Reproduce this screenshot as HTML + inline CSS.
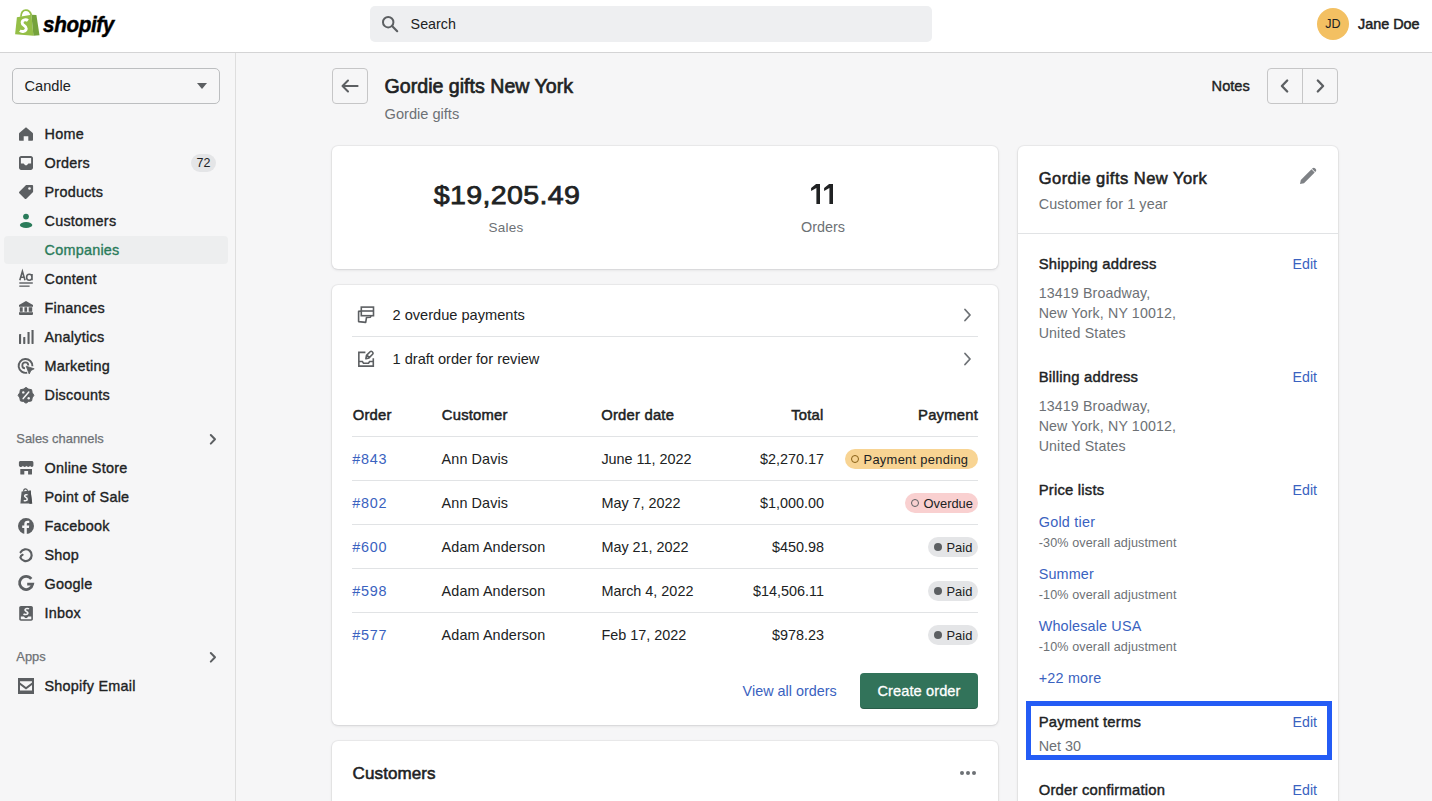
<!DOCTYPE html>
<html><head><meta charset="utf-8">
<style>
*{box-sizing:border-box;margin:0;padding:0}
html,body{width:1432px;height:801px;overflow:hidden;background:#f6f6f7;font-family:"Liberation Sans",sans-serif;color:#202223}
.abs{position:absolute}
#top{position:absolute;left:0;top:0;width:1432px;height:53px;background:#fff;border-bottom:1px solid #d4d4d5}
#side{position:absolute;left:0;top:53px;width:236px;height:748px;background:#f6f6f7;border-right:1px solid #dedede}
.t{position:absolute;white-space:nowrap}
.card{position:absolute;background:#fff;border-radius:6px;box-shadow:0 0 0 1px rgba(63,63,68,0.05),0 1px 3px 0 rgba(63,63,68,0.15)}
.div{position:absolute;height:1px;background:#e1e3e5}
</style></head><body>
<div id="top"></div>
<svg class="abs" style="left:0;top:0" width="45" height="45" viewBox="0 0 45 45">
    <path d="M20.9 16.8 C21.1 12.6 23.2 10.1 25.9 10.1 C28.6 10.1 30.5 12.2 31.3 15" fill="none" stroke="#95bf47" stroke-width="1.8"/>
    <path d="M23.6 15.8 C24 13.4 24.9 12.2 26.2 12.2" fill="none" stroke="#fff" stroke-width="0.6"/>
    <path d="M16.9 17.2 L31.4 14.7 L33.4 35.7 L15.1 34.3 Z" fill="#95bf47"/>
    <path d="M31.4 14.7 L36.4 15.1 L39.5 35.3 L33.4 35.7 Z" fill="#75a23c"/>
    <path d="M27.9 20.6 C26.6 19.5 22.3 19.2 22.1 22.6 C21.9 25.6 26.6 25.4 26.3 28.7 C26 31.7 21.8 32.1 19.9 30.7" fill="none" stroke="#fff" stroke-width="2.9"/>
  </svg>
<div class="t" style="left:43px;top:13.4px;font-size:24px;line-height:1;font-weight:bold;font-style:italic;letter-spacing:-0.4px;color:#000;-webkit-text-stroke:0.5px #000;transform:scale(0.86,0.93);transform-origin:0 0">shopify</div>
<div class="abs" style="left:370px;top:6px;width:562px;height:36px;background:#eeeff1;border-radius:5px"></div>
<svg class="abs" style="left:381px;top:15px" width="18" height="18" viewBox="0 0 20 20"><circle cx="8" cy="8" r="5.8" fill="none" stroke="#5c5f62" stroke-width="2.2"/><path d="M12.3 12.3 L18 18" stroke="#5c5f62" stroke-width="2.4" stroke-linecap="round"/></svg>
<div class="t" style="top:14.35px;font-size:14.3px;line-height:20px;color:#202223;left:410.6px;">Search</div>
<div class="abs" style="left:1317px;top:8px;width:32px;height:32px;border-radius:50%;background:#f3c062"></div>
<div class="t" style="top:14.47px;font-size:12.5px;line-height:20px;color:#202223;left:1033px;width:600px;text-align:center;">JD</div>
<div class="t" style="top:14.01px;font-size:14.4px;line-height:20px;color:#202223;-webkit-text-stroke:0.5px #202223;left:1358px;">Jane Doe</div>
<div id="side"></div>
<div class="abs" style="left:12px;top:68px;width:208px;height:36px;border:1px solid #bcbec0;border-radius:5px"></div>
<div class="t" style="top:75.94px;font-size:14.6px;line-height:20px;color:#202223;left:24.5px;">Candle</div>
<svg class="abs" style="left:197px;top:83px" width="10" height="6" viewBox="0 0 10 6"><path d="M0 0 H10 L5 6 Z" fill="#5c5f62"/></svg>
<div class="abs" style="left:4px;top:236px;width:224px;height:28px;border-radius:4px;background:#edeeef"></div>
<div class="t" style="top:124.01px;font-size:14.4px;line-height:20px;color:#202223;letter-spacing:0.25px;-webkit-text-stroke:0.35px #202223;left:44.5px;">Home</div>
<div class="t" style="top:153.01px;font-size:14.4px;line-height:20px;color:#202223;letter-spacing:0.25px;-webkit-text-stroke:0.35px #202223;left:44.5px;">Orders</div>
<div class="t" style="top:182.01px;font-size:14.4px;line-height:20px;color:#202223;letter-spacing:0.25px;-webkit-text-stroke:0.35px #202223;left:44.5px;">Products</div>
<div class="t" style="top:211.01px;font-size:14.4px;line-height:20px;color:#202223;letter-spacing:0.25px;-webkit-text-stroke:0.35px #202223;left:44.5px;">Customers</div>
<div class="t" style="top:240.01px;font-size:14.4px;line-height:20px;color:#2a7b5a;letter-spacing:0.25px;-webkit-text-stroke:0.35px #2a7b5a;left:44.5px;">Companies</div>
<div class="t" style="top:269.01px;font-size:14.4px;line-height:20px;color:#202223;letter-spacing:0.25px;-webkit-text-stroke:0.35px #202223;left:44.5px;">Content</div>
<div class="t" style="top:298.01px;font-size:14.4px;line-height:20px;color:#202223;letter-spacing:0.25px;-webkit-text-stroke:0.35px #202223;left:44.5px;">Finances</div>
<div class="t" style="top:327.01px;font-size:14.4px;line-height:20px;color:#202223;letter-spacing:0.25px;-webkit-text-stroke:0.35px #202223;left:44.5px;">Analytics</div>
<div class="t" style="top:356.01px;font-size:14.4px;line-height:20px;color:#202223;letter-spacing:0.25px;-webkit-text-stroke:0.35px #202223;left:44.5px;">Marketing</div>
<div class="t" style="top:385.01px;font-size:14.4px;line-height:20px;color:#202223;letter-spacing:0.25px;-webkit-text-stroke:0.35px #202223;left:44.5px;">Discounts</div>
<div class="t" style="top:458.01px;font-size:14.4px;line-height:20px;color:#202223;letter-spacing:0.25px;-webkit-text-stroke:0.35px #202223;left:44.5px;">Online Store</div>
<div class="t" style="top:487.01px;font-size:14.4px;line-height:20px;color:#202223;letter-spacing:0.25px;-webkit-text-stroke:0.35px #202223;left:44.5px;">Point of Sale</div>
<div class="t" style="top:516.01px;font-size:14.4px;line-height:20px;color:#202223;letter-spacing:0.25px;-webkit-text-stroke:0.35px #202223;left:44.5px;">Facebook</div>
<div class="t" style="top:545.01px;font-size:14.4px;line-height:20px;color:#202223;letter-spacing:0.25px;-webkit-text-stroke:0.35px #202223;left:44.5px;">Shop</div>
<div class="t" style="top:574.01px;font-size:14.4px;line-height:20px;color:#202223;letter-spacing:0.25px;-webkit-text-stroke:0.35px #202223;left:44.5px;">Google</div>
<div class="t" style="top:603.01px;font-size:14.4px;line-height:20px;color:#202223;letter-spacing:0.25px;-webkit-text-stroke:0.35px #202223;left:44.5px;">Inbox</div>
<div class="t" style="top:676.01px;font-size:14.4px;line-height:20px;color:#202223;letter-spacing:0.25px;-webkit-text-stroke:0.35px #202223;left:44.5px;">Shopify Email</div>
<svg class="abs" style="left:0;top:0;overflow:visible" width="236" height="801" viewBox="0 0 236 801"><path d="M26 127.2 L32.5 132.7 C32.8 133 33 133.4 33 133.8 V139.8 C33 140.4 32.6 140.8 32 140.8 H28.3 V136.3 H23.7 V140.8 H20 C19.4 140.8 19 140.4 19 139.8 V133.8 C19 133.4 19.2 133 19.5 132.7 Z" fill="#5c5f62" /><path d="M21.2 156 H30.8 C32 156 33 157 33 158.2 V167.8 C33 169 32 170 30.8 170 H21.2 C20 170 19 169 19 167.8 V158.2 C19 157 20 156 21.2 156 Z M20.9 157.9 V163.6 H23.6 L25.2 165.2 H26.8 L28.4 163.6 H31.1 V157.9 Z" fill="#5c5f62" fill-rule="evenodd"/><path d="M26.6 184.9 H32 C32.6 184.9 33.1 185.4 33.1 186 V191.4 C33.1 191.7 33 192 32.8 192.2 L26.3 198.7 C25.9 199.1 25.2 199.1 24.8 198.7 L19.3 193.2 C18.9 192.8 18.9 192.1 19.3 191.7 L25.8 185.2 C26 185 26.3 184.9 26.6 184.9 Z" fill="#5c5f62" /><circle cx="29.5" cy="188.5" r="1.3" fill="#f6f6f7"/><circle cx="26" cy="216.6" r="2.9" fill="#2a7b5a"/><ellipse cx="26.1" cy="225" rx="6.2" ry="3" fill="#2a7b5a"/><path d="M19.8 280.3 L22.4 271.3 L25 280.3 M20.7 277.2 H24.1" fill="none" stroke="#5c5f62" stroke-width="1.6"/><path d="M32 274 V280.3 M32 277.2 C32 275.3 31 274.2 29.3 274.2 C27.6 274.2 26.6 275.4 26.6 277.2 C26.6 279 27.6 280.2 29.3 280.2 C31 280.2 32 279.1 32 277.2" fill="none" stroke="#5c5f62" stroke-width="1.6"/><rect x="19.3" y="282.3" width="13.5" height="1.4" fill="#5c5f62"/><rect x="19.3" y="285.5" width="10.3" height="1.3" fill="#5c5f62"/><path d="M26 301 L33 305 V306.7 H19 V305 Z M19.8 307.2 H22.7 V311.8 H19.8 Z M24.4 307.2 H27.1 V311.8 H24.4 Z M28.7 307.2 H32.2 V311.8 H28.7 Z M19 312.2 H33 V314 C33 314.5 32.6 314.9 32.1 314.9 H19.9 C19.4 314.9 19 314.5 19 314 Z" fill="#5c5f62" /><rect x="19" y="334" width="2.1" height="10" rx="0.4" fill="#5c5f62"/><rect x="23.2" y="337" width="2.1" height="7" rx="0.4" fill="#5c5f62"/><rect x="27.5" y="332" width="2.1" height="12" rx="0.4" fill="#5c5f62"/><rect x="31.5" y="330" width="2.1" height="14" rx="0.4" fill="#5c5f62"/><path d="M27.2 372.6 A6.9 6.9 0 1 1 32.4 366.2" fill="none" stroke="#5c5f62" stroke-width="1.9"/><path d="M25 368.4 A3 3 0 1 1 28.3 365.4" fill="none" stroke="#5c5f62" stroke-width="1.8"/><path d="M26.2 366.2 L34.2 368.8 L31 370.4 L29.2 374 Z" fill="#5c5f62" stroke="#5c5f62" stroke-width="0.8" stroke-linejoin="round"/><path d="M26.00 387.40 L28.56 389.11 L31.59 389.71 L32.19 392.74 L33.90 395.30 L32.19 397.86 L31.59 400.89 L28.56 401.49 L26.00 403.20 L23.44 401.49 L20.41 400.89 L19.81 397.86 L18.10 395.30 L19.81 392.74 L20.41 389.71 L23.44 389.11 Z" fill="#5c5f62" stroke="#5c5f62" stroke-width="1" stroke-linejoin="round"/><path d="M23.2 398.6 L28.8 392" stroke="#f6f6f7" stroke-width="1.5" stroke-linecap="round"/><circle cx="23.3" cy="392.4" r="1.2" fill="#f6f6f7"/><circle cx="28.7" cy="398.3" r="1.2" fill="#f6f6f7"/><path d="M20.5 461 H31.8 C32.7 461 33.4 461.7 33.4 462.6 V465.3 C33.4 466.3 32.7 467 31.8 467 C31 467 30.4 466.5 30.1 465.8 C29.8 466.5 29.1 467 28.3 467 C27.5 467 26.8 466.5 26.5 465.8 C26.2 466.5 25.5 467 24.7 467 C23.9 467 23.2 466.5 22.9 465.8 C22.6 466.5 21.9 467 21.1 467 C19.8 467 18.9 466.2 18.9 465.2 V462.6 C18.9 461.7 19.6 461 20.5 461 Z" fill="#5c5f62" /><path d="M20.3 469.1 H32 V474 C32 474.3 31.7 474.6 31.4 474.6 H28.1 V470.9 H24.3 V474.6 H20.9 C20.6 474.6 20.3 474.3 20.3 474 Z" fill="#5c5f62" /><path d="M21.6 491.6 L30.6 490.6 L32.2 503.6 L20.4 503.6 Z" fill="#5c5f62" /><path d="M29.5 490.8 L30.6 490.6 L32.2 503.6 L29.5 504.1 Z" fill="#4a4d50" /><path d="M23.6 491.6 C23.6 489.8 24.6 488.9 25.6 488.9 C26.6 488.9 27.4 489.8 27.6 491.2" fill="none" stroke="#5c5f62" stroke-width="1.1"/><path d="M27.6 495 C26.9 494.5 24.6 494.5 24.6 496 C24.6 497.5 27.2 497.4 27.2 499.2 C27.2 500.8 25 501 23.8 500.3" fill="none" stroke="#f6f6f7" stroke-width="1.5"/><circle cx="26" cy="526.1" r="8" fill="#5c5f62"/><path d="M26.8 534.2 V528 H28.9 L29.2 525.6 H26.8 V524.2 C26.8 523.5 27 523 28 523 H29.3 V520.8 C29.1 520.8 28.3 520.7 27.4 520.7 C25.6 520.7 24.3 521.8 24.3 523.9 V525.6 H22.2 V528 H24.3 V534.2 Z" fill="#f6f6f7" /><path transform="translate(0 1.4)" d="M20.6 550.9 A5.9 5.9 0 1 1 20.4 556.2 Q20.6 554.4 22.6 553.4" fill="none" stroke="#5c5f62" stroke-width="2.2" stroke-linecap="round" stroke-linejoin="round"/><path d="M31.3 578.8 A6.6 6.6 0 1 0 32.6 584.2 H27.2" fill="none" stroke="#5c5f62" stroke-width="2.8"/><path d="M20.9 605.9 H31.2 C32.1 605.9 32.9 606.7 32.9 607.6 V619.1 C32.9 620 32.1 620.8 31.2 620.8 H20.9 C20 620.8 19.2 620 19.2 619.1 V607.6 C19.2 606.7 20 605.9 20.9 605.9 Z M20.8 616.6 V619.2 H31.3 V616.6 H28.3 L26.9 617.9 H25.2 L23.8 616.6 Z" fill="#5c5f62" fill-rule="evenodd"/><path d="M29 608.9 C28.2 608.3 25.2 608.1 25 609.9 C24.8 611.6 28.2 611.4 27.9 613.2 C27.6 614.9 24.6 614.8 23.5 614" fill="none" stroke="#f6f6f7" stroke-width="1.6"/><path d="M18 678 H34 V694 H18 Z M20 681.2 V682.6 L26 687.1 L32 682.6 V681.2 Z M20 684.9 V690.6 H32 V684.9 L26 689.4 Z" fill="#5c5f62" fill-rule="evenodd"/><path d="M210.8 435 L215 439.3 L210.8 443.6" fill="none" stroke="#5c5f62" stroke-width="2" stroke-linecap="round" stroke-linejoin="round"/><path d="M210.8 653 L215 657.3 L210.8 661.6" fill="none" stroke="#5c5f62" stroke-width="2" stroke-linecap="round" stroke-linejoin="round"/></svg>
<div class="abs" style="left:191px;top:154px;width:25px;height:18px;border-radius:9px;background:#e4e5e7"></div>
<div class="t" style="top:152.67px;font-size:12.5px;line-height:20px;color:#202223;left:-96.5px;width:600px;text-align:center;">72</div>
<div class="t" style="top:428.53px;font-size:12.9px;line-height:20px;color:#6d7175;-webkit-text-stroke:0.25px #6d7175;left:16.3px;">Sales channels</div>
<div class="t" style="top:646.53px;font-size:12.9px;line-height:20px;color:#6d7175;-webkit-text-stroke:0.25px #6d7175;left:16.3px;">Apps</div>
<div class="abs" style="left:332px;top:68px;width:36px;height:36px;border:1px solid #c6c6c7;border-radius:4px"></div>
<svg class="abs" style="left:340px;top:78px" width="20" height="16" viewBox="0 0 20 16"><path d="M8 2.5 L2.5 8 L8 13.5 M2.5 8 H17.6" fill="none" stroke="#5c5f62" stroke-width="2" stroke-linecap="round" stroke-linejoin="round"/></svg>
<div class="t" style="top:75.91px;font-size:19.6px;line-height:20px;color:#202223;-webkit-text-stroke:0.65px #202223;left:384.6px;">Gordie gifts New York</div>
<div class="t" style="top:103.84px;font-size:14.6px;line-height:20px;color:#6d7175;left:384.6px;">Gordie gifts</div>
<div class="t" style="top:75.84px;font-size:14.6px;line-height:20px;color:#202223;-webkit-text-stroke:0.4px #202223;left:1211.6px;">Notes</div>
<div class="abs" style="left:1267px;top:68px;width:71px;height:36px;border:1px solid #c6c6c7;border-radius:4px"></div>
<div class="abs" style="left:1302px;top:68px;width:1px;height:36px;background:#c6c6c7"></div>
<svg class="abs" style="left:1278px;top:78px" width="14" height="16" viewBox="0 0 14 16"><path d="M9.2 2.5 L3.9 8 L9.2 13.5" fill="none" stroke="#5c5f62" stroke-width="2.3" stroke-linecap="round" stroke-linejoin="round"/></svg>
<svg class="abs" style="left:1314px;top:78px" width="14" height="16" viewBox="0 0 14 16"><path d="M3.8 2.5 L9.1 8 L3.8 13.5" fill="none" stroke="#5c5f62" stroke-width="2.3" stroke-linecap="round" stroke-linejoin="round"/></svg>
<div class="card" style="left:332px;top:146px;width:666px;height:123px"></div>
<div class="t" style="top:184.89px;font-size:26px;line-height:20px;color:#202223;letter-spacing:0.3px;-webkit-text-stroke:0.75px #202223;left:206.60000000000002px;width:600px;text-align:center;transform:scaleX(1.1);transform-origin:50% 50%;">$19,205.49</div>
<div class="t" style="top:217.62px;font-size:13.5px;line-height:20px;color:#6d7175;letter-spacing:0.2px;left:206px;width:600px;text-align:center;">Sales</div>
<svg class="abs" style="left:0;top:0;overflow:visible" width="1" height="1"><path d="M816.1 184 H820 V204 H816.4 V188 L811.1 191.1 V188.1 Z" fill="#202223"/><path d="M829.1 184 H833 V204 H829.4 V188 L824.1 191.1 V188.1 Z" fill="#202223"/></svg>
<div class="t" style="top:216.61px;font-size:14.4px;line-height:20px;color:#6d7175;left:523px;width:600px;text-align:center;">Orders</div>
<div class="card" style="left:332px;top:285px;width:666px;height:440px"></div>
<svg class="abs" style="left:0;top:0;overflow:visible" width="1" height="1"><path d="M358.6 311.4 L366 310.6 L371.2 315 L370.4 317.2 L366.5 317.5 L365.7 322.4 L358.6 321.6 Z" fill="#fff" stroke="#5c5f62" stroke-width="1.6" stroke-linejoin="round"/><rect x="361.3" y="307.1" width="12.2" height="8.6" fill="#fff" stroke="#5c5f62" stroke-width="1.6"/><path d="M361.3 311 H373.5" stroke="#5c5f62" stroke-width="1.6"/></svg>
<div class="t" style="top:304.94px;font-size:14.6px;line-height:20px;color:#202223;left:392.5px;">2 overdue payments</div>
<svg class="abs" style="left:961px;top:307px" width="12" height="16" viewBox="0 0 12 16"><path d="M4 2.5 L9 8 L4 13.5" fill="none" stroke="#6d7175" stroke-width="1.8" stroke-linecap="round" stroke-linejoin="round"/></svg>
<div class="div" style="left:352px;top:336px;width:626px"></div>
<svg class="abs" style="left:0;top:0;overflow:visible" width="1" height="1"><path d="M365.4 352.4 H358.85 V366.1 H373.3 V358.2 M358.85 361.5 H362.4 L363.5 363.2 H368.5 L369.6 361.5 H373.3" fill="none" stroke="#5c5f62" stroke-width="1.6"/><path d="M365.9 358.7 L366.5 355.4 L370.1 351.8 C370.7 351.2 371.6 351.2 372.2 351.8 L372.6 352.2 C373.2 352.8 373.2 353.7 372.6 354.3 L369 357.9 Z M366.9 355 L369.4 357.5" fill="none" stroke="#5c5f62" stroke-width="1.6" stroke-linejoin="round"/></svg>
<div class="t" style="top:349.14px;font-size:14.6px;line-height:20px;color:#202223;left:392.5px;">1 draft order for review</div>
<svg class="abs" style="left:961px;top:351px" width="12" height="16" viewBox="0 0 12 16"><path d="M4 2.5 L9 8 L4 13.5" fill="none" stroke="#6d7175" stroke-width="1.8" stroke-linecap="round" stroke-linejoin="round"/></svg>
<div class="t" style="top:404.87px;font-size:14.8px;line-height:20px;color:#202223;letter-spacing:0.22px;-webkit-text-stroke:0.5px #202223;left:352.7px;">Order</div>
<div class="t" style="top:404.87px;font-size:14.8px;line-height:20px;color:#202223;letter-spacing:0.22px;-webkit-text-stroke:0.5px #202223;left:441.8px;">Customer</div>
<div class="t" style="top:404.87px;font-size:14.8px;line-height:20px;color:#202223;letter-spacing:0.22px;-webkit-text-stroke:0.5px #202223;left:601.2px;">Order date</div>
<div class="t" style="top:404.87px;font-size:14.8px;line-height:20px;color:#202223;letter-spacing:0.22px;-webkit-text-stroke:0.5px #202223;left:223.5px;width:600px;text-align:right;">Total</div>
<div class="t" style="top:404.87px;font-size:14.8px;line-height:20px;color:#202223;letter-spacing:0.22px;-webkit-text-stroke:0.5px #202223;left:378px;width:600px;text-align:right;">Payment</div>
<div class="div" style="left:352px;top:436px;width:626px"></div>
<div class="t" style="top:449.21px;font-size:14.4px;line-height:20px;color:#3a62c0;letter-spacing:0.8px;left:352.2px;">#843</div>
<div class="t" style="top:449.21px;font-size:14.4px;line-height:20px;color:#202223;letter-spacing:0.1px;left:441.6px;">Ann Davis</div>
<div class="t" style="top:449.21px;font-size:14.4px;line-height:20px;color:#202223;left:601.4px;">June 11, 2022</div>
<div class="t" style="top:449.21px;font-size:14.4px;line-height:20px;color:#202223;left:224px;width:600px;text-align:right;">$2,270.17</div>
<div class="abs" style="left:845px;top:449.2px;width:133px;height:20px;border-radius:10px;background:#f8d493"></div>
<div class="abs" style="left:851px;top:455.2px;width:8px;height:8px;border-radius:50%;border:1.7px solid #8a6116"></div>
<div class="t" style="top:449.73px;font-size:12.9px;line-height:20px;color:#202223;letter-spacing:0.3px;left:863.5px;">Payment pending</div>
<div class="div" style="left:352px;top:480px;width:626px"></div>
<div class="t" style="top:493.21px;font-size:14.4px;line-height:20px;color:#3a62c0;letter-spacing:0.8px;left:352.2px;">#802</div>
<div class="t" style="top:493.21px;font-size:14.4px;line-height:20px;color:#202223;letter-spacing:0.1px;left:441.6px;">Ann Davis</div>
<div class="t" style="top:493.21px;font-size:14.4px;line-height:20px;color:#202223;left:601.4px;">May 7, 2022</div>
<div class="t" style="top:493.21px;font-size:14.4px;line-height:20px;color:#202223;left:224px;width:600px;text-align:right;">$1,000.00</div>
<div class="abs" style="left:905px;top:493.2px;width:73px;height:20px;border-radius:10px;background:#f9d0d0"></div>
<div class="abs" style="left:911px;top:499.2px;width:8px;height:8px;border-radius:50%;border:1.7px solid #5c5f62"></div>
<div class="t" style="top:493.73px;font-size:12.9px;line-height:20px;color:#202223;left:923.5px;">Overdue</div>
<div class="div" style="left:352px;top:524px;width:626px"></div>
<div class="t" style="top:537.21px;font-size:14.4px;line-height:20px;color:#3a62c0;letter-spacing:0.8px;left:352.2px;">#600</div>
<div class="t" style="top:537.21px;font-size:14.4px;line-height:20px;color:#202223;letter-spacing:0.1px;left:441.6px;">Adam Anderson</div>
<div class="t" style="top:537.21px;font-size:14.4px;line-height:20px;color:#202223;left:601.4px;">May 21, 2022</div>
<div class="t" style="top:537.21px;font-size:14.4px;line-height:20px;color:#202223;left:224px;width:600px;text-align:right;">$450.98</div>
<div class="abs" style="left:928px;top:537.2px;width:50px;height:20px;border-radius:10px;background:#e4e5e7"></div>
<div class="abs" style="left:934px;top:543.2px;width:8px;height:8px;border-radius:50%;background:#5c5f62"></div>
<div class="t" style="top:537.73px;font-size:12.9px;line-height:20px;color:#202223;left:946.5px;">Paid</div>
<div class="div" style="left:352px;top:568px;width:626px"></div>
<div class="t" style="top:581.21px;font-size:14.4px;line-height:20px;color:#3a62c0;letter-spacing:0.8px;left:352.2px;">#598</div>
<div class="t" style="top:581.21px;font-size:14.4px;line-height:20px;color:#202223;letter-spacing:0.1px;left:441.6px;">Adam Anderson</div>
<div class="t" style="top:581.21px;font-size:14.4px;line-height:20px;color:#202223;left:601.4px;">March 4, 2022</div>
<div class="t" style="top:581.21px;font-size:14.4px;line-height:20px;color:#202223;left:224px;width:600px;text-align:right;">$14,506.11</div>
<div class="abs" style="left:928px;top:581.2px;width:50px;height:20px;border-radius:10px;background:#e4e5e7"></div>
<div class="abs" style="left:934px;top:587.2px;width:8px;height:8px;border-radius:50%;background:#5c5f62"></div>
<div class="t" style="top:581.73px;font-size:12.9px;line-height:20px;color:#202223;left:946.5px;">Paid</div>
<div class="div" style="left:352px;top:612px;width:626px"></div>
<div class="t" style="top:625.21px;font-size:14.4px;line-height:20px;color:#3a62c0;letter-spacing:0.8px;left:352.2px;">#577</div>
<div class="t" style="top:625.21px;font-size:14.4px;line-height:20px;color:#202223;letter-spacing:0.1px;left:441.6px;">Adam Anderson</div>
<div class="t" style="top:625.21px;font-size:14.4px;line-height:20px;color:#202223;left:601.4px;">Feb 17, 2022</div>
<div class="t" style="top:625.21px;font-size:14.4px;line-height:20px;color:#202223;left:224px;width:600px;text-align:right;">$978.23</div>
<div class="abs" style="left:928px;top:625.2px;width:50px;height:20px;border-radius:10px;background:#e4e5e7"></div>
<div class="abs" style="left:934px;top:631.2px;width:8px;height:8px;border-radius:50%;background:#5c5f62"></div>
<div class="t" style="top:625.73px;font-size:12.9px;line-height:20px;color:#202223;left:946.5px;">Paid</div>
<div class="t" style="top:680.81px;font-size:14.4px;line-height:20px;color:#3a62c0;left:742.6px;">View all orders</div>
<div class="abs" style="left:860px;top:673px;width:118px;height:36px;border-radius:4px;background:#32735a;box-shadow:inset 0 -1px 0 rgba(0,0,0,.2)"></div>
<div class="t" style="top:680.74px;font-size:14.6px;line-height:20px;color:#fff;letter-spacing:0.1px;-webkit-text-stroke:0.3px #fff;left:619px;width:600px;text-align:center;">Create order</div>
<div class="card" style="left:332px;top:741px;width:666px;height:120px"></div>
<div class="t" style="top:763.91px;font-size:17px;line-height:20px;color:#202223;letter-spacing:0.1px;-webkit-text-stroke:0.55px #202223;left:352.6px;">Customers</div>
<div class="abs" style="left:960px;top:771px;width:4px;height:4px;border-radius:50%;background:#6d7175"></div>
<div class="abs" style="left:966px;top:771px;width:4px;height:4px;border-radius:50%;background:#6d7175"></div>
<div class="abs" style="left:972px;top:771px;width:4px;height:4px;border-radius:50%;background:#6d7175"></div>
<div class="card" style="left:1018px;top:146px;width:320px;height:700px"></div>
<div class="t" style="top:167.98px;font-size:16.5px;line-height:20px;color:#202223;letter-spacing:0.47px;-webkit-text-stroke:0.55px #202223;left:1038.7px;">Gordie gifts New York</div>
<div class="t" style="top:194.41px;font-size:14.4px;line-height:20px;color:#6d7175;letter-spacing:0.1px;left:1038.7px;">Customer for 1 year</div>
<svg class="abs" style="left:1299px;top:167px" width="18" height="18" viewBox="0 0 18 18"><path d="M1 17 L1.8 13 L12.5 2.3 L15.7 5.5 L5 16.2 Z M13.5 1.3 C14.2 .6 15.3 .6 16 1.3 L16.7 2 C17.4 2.7 17.4 3.8 16.7 4.5 L16.2 5 L13 1.8 Z" fill="#7e8185"/></svg>
<div class="div" style="left:1018px;top:233px;width:320px"></div>
<div class="t" style="top:254.17px;font-size:14.8px;line-height:20px;color:#202223;letter-spacing:0.22px;-webkit-text-stroke:0.42px #202223;left:1038.7px;">Shipping address</div>
<div class="t" style="top:254.38px;font-size:14.2px;line-height:20px;color:#3a62c0;left:717px;width:600px;text-align:right;">Edit</div>
<div class="t" style="top:282.88px;font-size:14.2px;line-height:20px;color:#6d7175;letter-spacing:0.15px;left:1038.7px;">13419 Broadway,</div>
<div class="t" style="top:302.88px;font-size:14.2px;line-height:20px;color:#6d7175;letter-spacing:0.15px;left:1038.7px;">New York, NY 10012,</div>
<div class="t" style="top:322.88px;font-size:14.2px;line-height:20px;color:#6d7175;letter-spacing:0.15px;left:1038.7px;">United States</div>
<div class="t" style="top:366.87px;font-size:14.8px;line-height:20px;color:#202223;letter-spacing:0.22px;-webkit-text-stroke:0.42px #202223;left:1038.7px;">Billing address</div>
<div class="t" style="top:367.08px;font-size:14.2px;line-height:20px;color:#3a62c0;left:717px;width:600px;text-align:right;">Edit</div>
<div class="t" style="top:396.28px;font-size:14.2px;line-height:20px;color:#6d7175;letter-spacing:0.15px;left:1038.7px;">13419 Broadway,</div>
<div class="t" style="top:416.28px;font-size:14.2px;line-height:20px;color:#6d7175;letter-spacing:0.15px;left:1038.7px;">New York, NY 10012,</div>
<div class="t" style="top:436.28px;font-size:14.2px;line-height:20px;color:#6d7175;letter-spacing:0.15px;left:1038.7px;">United States</div>
<div class="t" style="top:479.67px;font-size:14.8px;line-height:20px;color:#202223;letter-spacing:0.22px;-webkit-text-stroke:0.42px #202223;left:1038.7px;">Price lists</div>
<div class="t" style="top:479.88px;font-size:14.2px;line-height:20px;color:#3a62c0;left:717px;width:600px;text-align:right;">Edit</div>
<div class="t" style="top:511.71px;font-size:14.4px;line-height:20px;color:#3a62c0;letter-spacing:0.25px;left:1038.7px;">Gold tier</div>
<div class="t" style="top:533.33px;font-size:12.6px;line-height:20px;color:#6d7175;letter-spacing:0.12px;left:1038.7px;">-30% overall adjustment</div>
<div class="t" style="top:564.01px;font-size:14.4px;line-height:20px;color:#3a62c0;letter-spacing:0.15px;left:1038.7px;">Summer</div>
<div class="t" style="top:585.43px;font-size:12.6px;line-height:20px;color:#6d7175;letter-spacing:0.12px;left:1038.7px;">-10% overall adjustment</div>
<div class="t" style="top:615.61px;font-size:14.4px;line-height:20px;color:#3a62c0;letter-spacing:0.15px;left:1038.7px;">Wholesale USA</div>
<div class="t" style="top:637.33px;font-size:12.6px;line-height:20px;color:#6d7175;letter-spacing:0.12px;left:1038.7px;">-10% overall adjustment</div>
<div class="t" style="top:667.51px;font-size:14.4px;line-height:20px;color:#3a62c0;letter-spacing:0.2px;left:1038.7px;">+22 more</div>
<div class="abs" style="left:1026px;top:701px;width:306px;height:59px;border:5px solid #245cf5"></div>
<div class="t" style="top:711.87px;font-size:14.8px;line-height:20px;color:#202223;letter-spacing:0.22px;-webkit-text-stroke:0.42px #202223;left:1038.7px;">Payment terms</div>
<div class="t" style="top:712.08px;font-size:14.2px;line-height:20px;color:#3a62c0;left:717px;width:600px;text-align:right;">Edit</div>
<div class="t" style="top:736.01px;font-size:14.4px;line-height:20px;color:#6d7175;left:1038.7px;">Net 30</div>
<div class="t" style="top:780.07px;font-size:14.8px;line-height:20px;color:#202223;letter-spacing:0.22px;-webkit-text-stroke:0.42px #202223;left:1038.7px;">Order confirmation</div>
<div class="t" style="top:780.28px;font-size:14.2px;line-height:20px;color:#3a62c0;left:717px;width:600px;text-align:right;">Edit</div>
</body></html>
